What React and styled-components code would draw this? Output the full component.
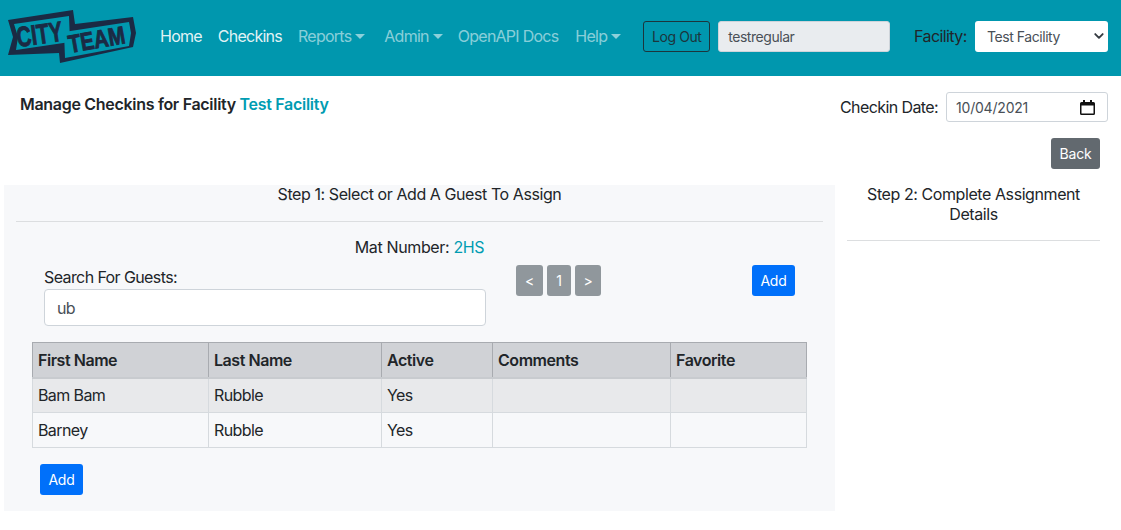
import React from "react";
import styled, { createGlobalStyle } from "styled-components";

const Global = createGlobalStyle`
  html, body { margin: 0; padding: 0; background: #fff; }
  body { font-family: Inter, "Liberation Sans", sans-serif; font-size: 16px; letter-spacing: -0.6px; color: #212529; }
  * { box-sizing: border-box; }
`;
const Page = styled.div`width: 1121px; height: 530px; overflow: hidden;`;
const Nav = styled.nav`
  height: 76px; background: #0097ae; display: flex; align-items: center; padding: 0 13px 0 8px;
`;
const LogoWrap = styled.svg`width: 128px; height: 54px; flex: none; margin: -4px 24px 0 0; overflow: visible;`;
const NavLink = styled.span`
  font-size: 16px; letter-spacing: -0.75px; line-height: 24px; margin-right: ${p => p.$gap}px; white-space: nowrap; margin-top: -5px;
  color: ${p => (p.$active ? "rgba(255,255,255,.9)" : "rgba(255,255,255,.55)")};
  ${p => p.$caret && `&::after { content: ""; display: inline-block; margin-left: 4px; vertical-align: 3px;
    border-top: 5px solid currentColor; border-left: 5px solid transparent; border-right: 5px solid transparent; }`}
`;
const LogOut = styled.button`
  height: 31px; width: 67px; padding: 0; font: 14px Inter, sans-serif; letter-spacing: -0.45px; color: #212529; background: transparent;
  border: 1px solid #212529; border-radius: 3px; margin: -4px 8px 0 0;
  opacity: .85;
`;
const ReadOnly = styled.div`
  width: 172px; height: 31px; background: #e9ecef; border: 1px solid #ced4da; border-radius: 3px; margin-top: -4px;
  font-size: 14px; letter-spacing: -0.45px; line-height: 29px; padding-left: 9px; color: #495057; margin-right: 24px;
`;
const FacilityLabel = styled.span`font-size: 16px; width: 61px; flex: none; margin-top: -5px; color: #212529;`;
const SelectBox = styled.div`
  width: 133px; height: 31px; background: #fff; border-radius: 3px; display: flex; align-items: center; margin-top: -4px;
  justify-content: space-between; padding: 0 1px 0 12px; font-size: 14px; letter-spacing: -0.45px; color: #495057;
`;
const TopRow = styled.div`
  display: flex; justify-content: space-between; align-items: flex-start; padding: 16px 13px 0 20px; height: 62px;
`;
const Title = styled.div`font-weight: 600; font-size: 16px; letter-spacing: -0.3px; line-height: 24px;`;
const Accent = styled.span`color: #009cb2;`;
const DateGroup = styled.div`display: flex; align-items: center; gap: 8px;`;
const DateLabel = styled.span`font-size: 16px;`;
const DateBox = styled.div`
  width: 162px; height: 30px; border: 1px solid #ced4da; border-radius: 3px; background: #fff;
  display: flex; align-items: center; justify-content: space-between; padding: 0 12px 0 9px; font-size: 14px; letter-spacing: -0.2px; color: #495057;
`;
const BackRow = styled.div`display: flex; justify-content: flex-end; padding-right: 21px; height: 47px;`;
const BaseBtn = styled.button`
  height: 31px; border: 0; border-radius: 3px; padding: 0; font: 14px Inter, sans-serif; letter-spacing: -0.2px; color: #fff;
  width: ${p => p.$w}px; background: ${p => p.$bg};
`;
const Columns = styled.div`display: flex; align-items: flex-start; padding-left: 4px;`;
const LeftPanel = styled.section`
  width: 831px; height: 326px; background: #f7f8fa; padding: 0 12px; flex: none;
`;
const RightPanel = styled.section`width: 253px; margin-left: 12px; flex: none;`;
const StepTitle = styled.div`
  text-align: center; font-weight: 400; font-size: 16px; letter-spacing: -0.42px; line-height: 20px; margin-top: -1px; padding-bottom: 1px;
`;
const Rule = styled.div`height: 1px; background: #dcdee0; margin-top: ${p => p.$mt}px;`;
const Mat = styled.div`text-align: center; font-weight: 400; font-size: 16px; letter-spacing: -0.36px; line-height: 24px; margin-top: 13px; padding-bottom: 1px;`;
const ToolRow = styled.div`display: flex; align-items: flex-start; height: 82px; padding-left: 28px;`;
const SearchCol = styled.div`width: 442px; padding-top: 5px; flex: none;`;
const SearchLabel = styled.div`font-size: 16px; line-height: 24px;`;
const SearchInput = styled.div`
  height: 37px; border: 1px solid #ced4da; border-radius: 4px; background: #fff; padding-left: 12px;
  font-size: 16px; line-height: 37px; color: #495057;
`;
const Pager = styled.div`display: flex; gap: 4px; margin: 5px 0 0 30px; width: 236px;`;
const ToolBtns = styled.div`margin-top: 5px; display: flex;`;
const Table = styled.table`
  border-collapse: collapse; table-layout: fixed; width: 775px; margin-left: 16px; font-size: 16px;
`;
const Th = styled.th`
  width: ${p => p.$w}px; height: 35px; text-align: left; font-weight: 600; font-size: 16px; letter-spacing: -0.45px; padding: 0 5px;
  background: #d0d2d6; border: 1px solid #a8abb0; border-bottom: 2px solid #c8cbcf;
`;
const Td = styled.td`
  height: 35px; padding: 0 5px; border: 1px solid #d6dade; font-size: 16px;
  background: ${p => (p.$odd ? "#e8e9eb" : "transparent")};
`;
const BottomAdd = styled.div`padding: 16px 0 0 24px;`;
const LogoText = styled.text`
  font-family: "Liberation Sans", sans-serif; font-weight: 700; letter-spacing: 0; fill: #1b2a44; stroke: #1b2a44; stroke-width: .9px;
`;

const Logo = () => (
  <LogoWrap viewBox="0 0 128 54">
    <path fill="#1b2a44" d="M0 11 L65 1 L67 15 L125 8 L128 24 L125 38 L52 54 L51 44 L0 46 L5 28 Z" />
    <path fill="#0097ae" d="M6 15 L61 7 L62 33 L8 41 L10 28 Z" />
    <path fill="#0097ae" d="M56 23 L121 13 L123 24 L121 37 L57 49 Z" />
    <LogoText x="10" y="38" fontSize="28" textLength="46" lengthAdjust="spacingAndGlyphs" transform="rotate(-8 10 38)">CITY</LogoText>
    <LogoText x="62" y="44" fontSize="25" textLength="57" lengthAdjust="spacingAndGlyphs" transform="rotate(-10 62 44)">TEAM</LogoText>
  </LogoWrap>
);
const Chevron = () => (
  <svg width="16" height="16" viewBox="0 0 16 16"><path d="M2 5l6 6 6-6" fill="none" stroke="#343a40" strokeWidth="3" strokeLinecap="round" strokeLinejoin="round" transform="translate(3 3) scale(.62)" /></svg>
);
const Calendar = () => (
  <svg width="15" height="15" viewBox="0 0 15 15"><path fill="#111" d="M3 0h2v2h5V0h2v2h1.500A1.500 1.500 0 0 1 15 3.500v10a1.500 1.500 0 0 1-1.500 1.500h-12A1.500 1.500 0 0 1 0 13.500v-10A1.500 1.500 0 0 1 1.500 2H3zM1.500 5.500v8h12v-8z" /></svg>
);
const rows = [["Bam Bam", "Rubble", "Yes"], ["Barney", "Rubble", "Yes"]];

export default function App() {
  return (
    <Page>
      <Global />
      <Nav>
        <Logo />
        <NavLink $active $gap={16}>Home</NavLink>
        <NavLink $active $gap={16}>Checkins</NavLink>
        <NavLink $gap={19} $caret>Reports</NavLink>
        <NavLink $gap={15} $caret>Admin</NavLink>
        <NavLink $gap={17}>OpenAPI Docs</NavLink>
        <NavLink $gap={22} $caret>Help</NavLink>
        <LogOut>Log Out</LogOut>
        <ReadOnly>testregular</ReadOnly>
        <FacilityLabel>Facility:</FacilityLabel>
        <SelectBox>Test Facility<Chevron /></SelectBox>
      </Nav>
      <TopRow>
        <Title>Manage Checkins for Facility <Accent>Test Facility</Accent></Title>
        <DateGroup>
          <DateLabel>Checkin Date:</DateLabel>
          <DateBox>10/04/2021<Calendar /></DateBox>
        </DateGroup>
      </TopRow>
      <BackRow><BaseBtn $w={49} $bg="#62696f">Back</BaseBtn></BackRow>
      <Columns>
        <LeftPanel>
          <StepTitle>Step 1: Select or Add A Guest To Assign</StepTitle>
          <Rule $mt={16} />
          <Mat>Mat Number: <Accent>2HS</Accent></Mat>
          <ToolRow>
            <SearchCol>
              <SearchLabel>Search For Guests:</SearchLabel>
              <SearchInput>ub</SearchInput>
            </SearchCol>
            <Pager>
              <BaseBtn $w={27} $bg="#90979c">&lt;</BaseBtn>
              <BaseBtn $w={24} $bg="#90979c">1</BaseBtn>
              <BaseBtn $w={26} $bg="#90979c">&gt;</BaseBtn>
            </Pager>
            <ToolBtns><BaseBtn $w={43} $bg="#0070fa">Add</BaseBtn></ToolBtns>
          </ToolRow>
          <Table>
            <thead>
              <tr>
                <Th $w={176}>First Name</Th>
                <Th $w={173}>Last Name</Th>
                <Th $w={111}>Active</Th>
                <Th $w={178}>Comments</Th>
                <Th $w={136}>Favorite</Th>
              </tr>
            </thead>
            <tbody>
              {rows.map((r, i) => (
                <tr key={r[0]}>
                  {r.map(c => <Td key={c} $odd={i === 0}>{c}</Td>)}
                  <Td $odd={i === 0} />
                  <Td $odd={i === 0} />
                </tr>
              ))}
            </tbody>
          </Table>
          <BottomAdd><BaseBtn $w={43} $bg="#0070fa">Add</BaseBtn></BottomAdd>
        </LeftPanel>
        <RightPanel>
          <StepTitle>Step 2: Complete Assignment Details</StepTitle>
          <Rule $mt={15} />
        </RightPanel>
      </Columns>
    </Page>
  );
}
